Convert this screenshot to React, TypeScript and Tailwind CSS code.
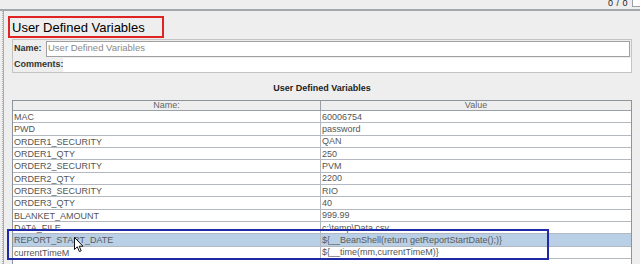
import React from 'react';

const rows: [string, string][] = [
  ['MAC', '60006754'],
  ['PWD', 'password'],
  ['ORDER1_SECURITY', 'QAN'],
  ['ORDER1_QTY', '250'],
  ['ORDER2_SECURITY', 'PVM'],
  ['ORDER2_QTY', '2200'],
  ['ORDER3_SECURITY', 'RIO'],
  ['ORDER3_QTY', '40'],
  ['BLANKET_AMOUNT', '999.99'],
  ['DATA_FILE', 'c:\\temp\\Data.csv'],
  ['REPORT_START_DATE', '${__BeanShell(return getReportStartDate();)}'],
  ['currentTimeM', '${__time(mm,currentTimeM)}'],
];

const SELECTED = 10;

const App = () => {
  return (
    <div className="relative w-[640px] h-[264px] overflow-hidden bg-[#eeeeee] flex flex-col font-['Liberation_Sans',Arial,sans-serif] text-[#555]">
      {/* top status strip */}
      <div className="h-[9px] flex justify-end items-start overflow-hidden">
        <span className="mt-[-1px] text-[9px] leading-[9px] text-[#222] tracking-[0.5px]">0 / 0</span>
        <div className="ml-[4px] mr-[-3px] w-[11px] h-[7px] border border-t-0 border-[#9aa0a8] bg-white" />
      </div>
      <div className="h-[2px] bg-[#a2a7ae]" />

      <div className="flex flex-1 min-h-0">
        <div className="w-[3px] border-r border-dotted border-[#b8b8b8]" />
        <div className="flex-1 border-l border-[#a8abb0] flex flex-col pr-[8px]">
          {/* title */}
          <div className="ml-[4px] mt-[5px] w-[156px] h-[22px] border-2 border-[#e02424] flex items-center pl-[2px]">
            <span className="text-[13px] leading-none text-black">User Defined Variables</span>
          </div>

          {/* name / comments */}
          <div className="ml-[8px] mt-[1px] border border-[#c4c4c4] flex flex-col">
            <div className="h-[17px] flex items-center">
              <span className="w-[33px] pl-[1px] text-[9px] font-bold text-[#333]">Name:</span>
              <div className="flex-1 h-[16px] mr-[1px] bg-white border border-[#a0a0a0] flex items-center pl-[1px]">
                <span className="text-[9.5px] text-[#8a8a8a]">User Defined Variables</span>
              </div>
            </div>
            <div className="h-[15px] flex items-center">
              <span className="w-[50px] pl-[1px] text-[9px] font-bold text-[#333]">Comments:</span>
              <div className="flex-1 h-[14px] bg-white" />
            </div>
          </div>

          <div className="mt-[9px] h-[12px] leading-[12px] text-center text-[9px] font-bold text-[#222] pl-[8px]">
            User Defined Variables
          </div>

          {/* table */}
          <div className="ml-[8px] mt-[6px] flex-1 bg-white border-l border-r border-t border-[#8e949c] flex flex-col">
            <div className="h-[10px] flex bg-[#eeeeee] border-b border-[#9aa0a8] text-[9px] leading-[9px] text-[#666]">
              <div className="w-[308px] border-r border-[#9aa0a8] text-center">Name:</div>
              <div className="flex-1 text-center">Value</div>
            </div>
            {rows.map(([name, value], i) => (
              <div
                key={name}
                className={`h-[12.33px] flex items-center border-b border-[#b4b8c0] text-[9px] ${
                  i === SELECTED ? 'bg-[#b8cfe5] text-[#5a5a5a]' : 'text-[#555]'
                }`}
              >
                <div className="w-[308px] h-full border-r border-[#b4b8c0] pl-[1px] leading-[12px]">{name}</div>
                <div className="flex-1 pl-[1px] leading-[12px]">{value}</div>
              </div>
            ))}
          </div>
        </div>
      </div>

      {/* annotation box */}
      <div className="absolute left-[7px] top-[229px] w-[542px] h-[31px] border-2 border-[#1e2aa6]" />

      {/* mouse pointer */}
      <svg className="absolute left-[74px] top-[237px]" width="10" height="16" viewBox="0 0 10 16">
        <path d="M0.5 0.5 L0.5 12.5 L3.3 9.8 L5.4 14.6 L7.2 13.8 L5.2 9.2 L9 9.2 Z" fill="#fff" stroke="#111" strokeWidth="1" strokeLinejoin="round" />
      </svg>
    </div>
  );
};

export default App;
